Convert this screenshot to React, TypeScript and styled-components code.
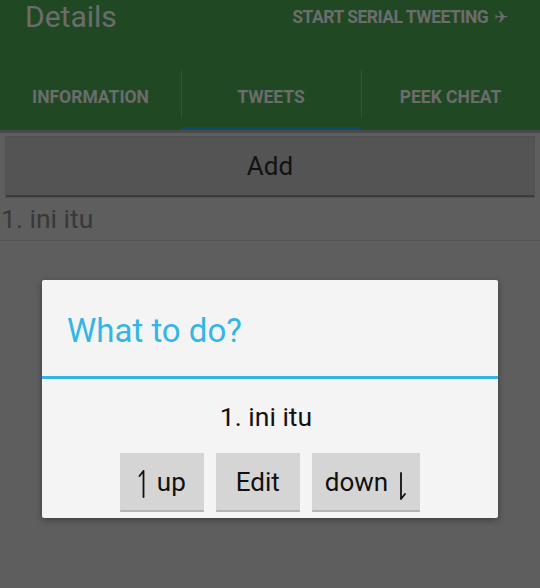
import React from 'react'
import styled, {createGlobalStyle} from 'styled-components'

const GlobalStyle = createGlobalStyle`
    html, body {
        margin: 0;
        padding: 0;
        background: #5e5e5e;
    }
    body {
        font-family: Roboto, "Liberation Sans", sans-serif;
    }
`

const Screen = styled.div`
    position: relative;
    width: 540px;
    height: 588px;
    overflow: hidden;
    background: #5e5e5e;
`

const Header = styled.div`
    background: #204923;
    border-bottom: 3px solid #4b4b4b;
`

const ActionBar = styled.div`
    display: flex;
    align-items: flex-start;
    justify-content: space-between;
    height: 58px;
    padding: 0 32px 0 25px;
`

const Title = styled.h1`
    margin: 0;
    padding-top: 2px;
    font-size: 30px;
    font-weight: 400;
    line-height: 30px;
    color: #6c6c6c;
`

const ActionButton = styled.div`
    display: flex;
    align-items: center;
    gap: 6px;
    margin-top: 5px;
    font-size: 17.5px;
    font-weight: 700;
    line-height: 24px;
    color: #6c6c6c;
    letter-spacing: -0.5px;
`

const Plane = styled.span`
    font-family: "DejaVu Sans", sans-serif;
    font-size: 17px;
    font-weight: 400;
`

const Tabs = styled.div`
    display: grid;
    grid-template-columns: 181px 180px 1fr;
    height: 72px;
`

const Tab = styled.div<{$active?: boolean; $divider?: boolean}>`
    display: flex;
    align-items: center;
    justify-content: center;
    padding-top: 9px;
    font-size: 17.5px;
    font-weight: 700;
    color: #6c6c6c;
    position: relative;
    border-bottom: 3px solid ${({$active}) => ($active ? '#0e4a6b' : 'transparent')};
    &::before {
        content: '';
        display: ${({$divider}) => ($divider ? 'block' : 'none')};
        position: absolute;
        left: 0;
        top: 12px;
        bottom: 9px;
        width: 1px;
        background: #2b582e;
    }
`

const Content = styled.div`
    display: flex;
    flex-direction: column;
    padding-top: 4px;
`

const AddButton = styled.div`
    margin: 0 6px;
    height: 58px;
    display: flex;
    align-items: center;
    justify-content: center;
    background: #545454;
    border-bottom: 2px solid #3c3c3c;
    box-shadow: 0 0 0 1px #505050;
    font-size: 26px;
    color: #121212;
`

const ListRow = styled.div`
    height: 43px;
    display: flex;
    align-items: center;
    padding-left: 1px;
    font-size: 26.5px;
    color: #383838;
    border-bottom: 1px solid #545454;
`

const Overlay = styled.div`
    position: absolute;
    inset: 0;
    display: flex;
    justify-content: center;
    align-items: flex-start;
    padding-top: 280px;
`

const Dialog = styled.div`
    width: 456px;
    background: #f4f4f4;
    border-radius: 2px;
    box-shadow: 0 2px 6px rgba(0, 0, 0, 0.35);
    display: flex;
    flex-direction: column;
`

const DialogTitle = styled.div`
    height: 99px;
    display: flex;
    align-items: center;
    padding: 4px 0 0 25px;
    box-sizing: border-box;
    font-size: 33px;
    color: #33b5e5;
    border-bottom: 3px solid #33b5e5;
`

const DialogMessage = styled.div`
    height: 74px;
    display: flex;
    align-items: center;
    justify-content: center;
    padding-right: 8px;
    font-size: 26.5px;
    color: #111;
`

const ButtonRow = styled.div`
    display: flex;
    justify-content: center;
    gap: 12px;
    padding-bottom: 6px;
`

const DialogButton = styled.div<{$pad?: number}>`
    height: 57px;
    padding: 0 ${({$pad}) => $pad ?? 20}px;
    display: flex;
    align-items: center;
    gap: 11px;
    background: #d5d5d5;
    border-bottom: 2px solid #b4b4b4;
    border-radius: 1px;
    font-size: 26px;
    color: #111;
`

const HarpoonIcon = styled.svg<{$drop?: number}>`
    flex: none;
    margin-top: ${({$drop}) => $drop ?? 4}px;
`

const UpHarpoon = () => (
    <HarpoonIcon width="8" height="28" viewBox="0 0 8 28">
        <path d="M5.5 1 V27 M5.5 1 L1.5 6" stroke="#111" strokeWidth="1.8" fill="none" strokeLinecap="round" />
    </HarpoonIcon>
)

const DownHarpoon = () => (
    <HarpoonIcon width="8" height="28" viewBox="0 0 8 28" $drop={8}>
        <path d="M2 1 V27 M2 27 L6 22" stroke="#111" strokeWidth="1.8" fill="none" strokeLinecap="round" />
    </HarpoonIcon>
)

export default function App() {
    return (
        <Screen>
            <GlobalStyle />
            <Header>
                <ActionBar>
                    <Title>Details</Title>
                    <ActionButton>
                        START SERIAL TWEETING <Plane>✈</Plane>
                    </ActionButton>
                </ActionBar>
                <Tabs>
                    <Tab>INFORMATION</Tab>
                    <Tab $active $divider>TWEETS</Tab>
                    <Tab $divider>PEEK CHEAT</Tab>
                </Tabs>
            </Header>
            <Content>
                <AddButton>Add</AddButton>
                <ListRow>1. ini itu</ListRow>
            </Content>
            <Overlay>
                <Dialog>
                    <DialogTitle>What to do?</DialogTitle>
                    <DialogMessage>1. ini itu</DialogMessage>
                    <ButtonRow>
                        <DialogButton $pad={18}><UpHarpoon />up</DialogButton>
                        <DialogButton>Edit</DialogButton>
                        <DialogButton $pad={13}>down<DownHarpoon /></DialogButton>
                    </ButtonRow>
                </Dialog>
            </Overlay>
        </Screen>
    )
}
